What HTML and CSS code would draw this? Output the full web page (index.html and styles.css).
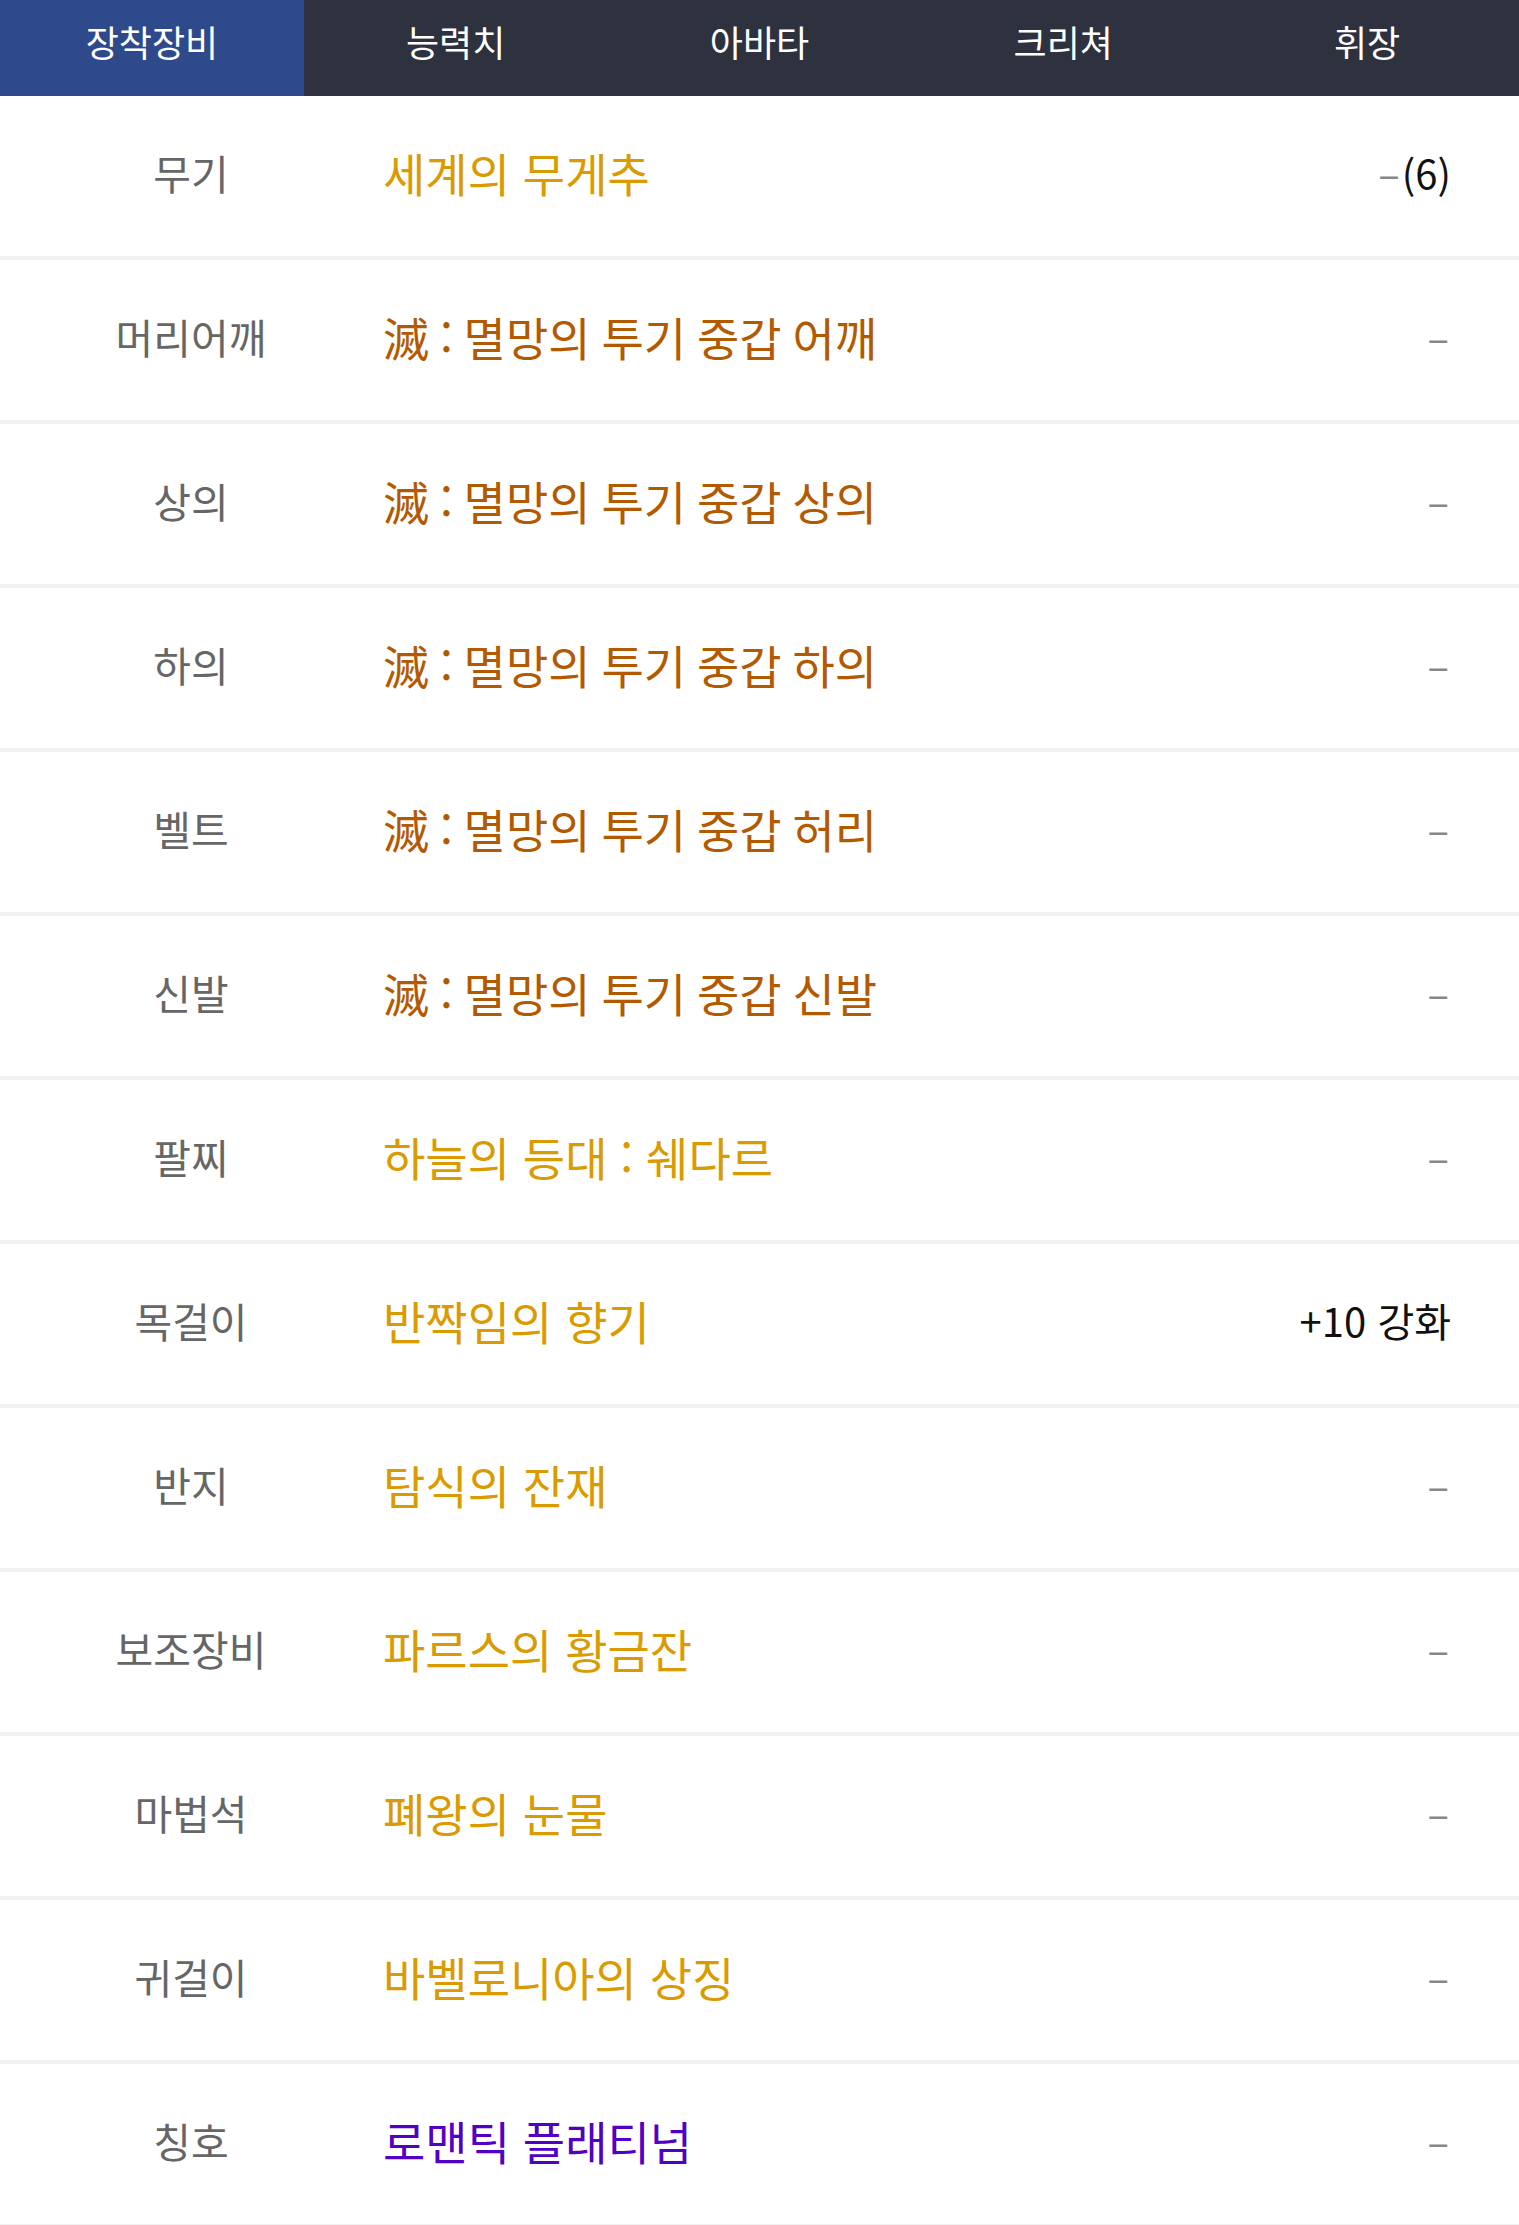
FILE: index.html
```html
<!DOCTYPE html>
<html lang="ko">
<head>
  <meta charset="UTF-8" />
  <title>장착장비</title>
  <link rel="stylesheet" href="styles.css">
</head>
<body>
  <nav class="tabs">
    <a class="tab active">장착장비</a>
    <a class="tab">능력치</a>
    <a class="tab">아바타</a>
    <a class="tab">크리쳐</a>
    <a class="tab">휘장</a>
  </nav>

  <div class="equip-list">
    <div class="row">
      <div class="slot">무기</div>
      <div class="name epic">세계의 무게추</div>
      <div class="value"><span class="dash">–</span>(6)</div>
    </div>
    <div class="row">
      <div class="slot">머리어깨</div>
      <div class="name legend">滅 : 멸망의 투기 중갑 어깨</div>
      <div class="value"><span class="dash">–</span></div>
    </div>
    <div class="row">
      <div class="slot">상의</div>
      <div class="name legend">滅 : 멸망의 투기 중갑 상의</div>
      <div class="value"><span class="dash">–</span></div>
    </div>
    <div class="row">
      <div class="slot">하의</div>
      <div class="name legend">滅 : 멸망의 투기 중갑 하의</div>
      <div class="value"><span class="dash">–</span></div>
    </div>
    <div class="row">
      <div class="slot">벨트</div>
      <div class="name legend">滅 : 멸망의 투기 중갑 허리</div>
      <div class="value"><span class="dash">–</span></div>
    </div>
    <div class="row">
      <div class="slot">신발</div>
      <div class="name legend">滅 : 멸망의 투기 중갑 신발</div>
      <div class="value"><span class="dash">–</span></div>
    </div>
    <div class="row">
      <div class="slot">팔찌</div>
      <div class="name epic">하늘의 등대 : 쉐다르</div>
      <div class="value"><span class="dash">–</span></div>
    </div>
    <div class="row">
      <div class="slot">목걸이</div>
      <div class="name epic">반짝임의 향기</div>
      <div class="value">+10 강화</div>
    </div>
    <div class="row">
      <div class="slot">반지</div>
      <div class="name epic">탐식의 잔재</div>
      <div class="value"><span class="dash">–</span></div>
    </div>
    <div class="row">
      <div class="slot">보조장비</div>
      <div class="name epic">파르스의 황금잔</div>
      <div class="value"><span class="dash">–</span></div>
    </div>
    <div class="row">
      <div class="slot">마법석</div>
      <div class="name epic">폐왕의 눈물</div>
      <div class="value"><span class="dash">–</span></div>
    </div>
    <div class="row">
      <div class="slot">귀걸이</div>
      <div class="name epic">바벨로니아의 상징</div>
      <div class="value"><span class="dash">–</span></div>
    </div>
    <div class="row">
      <div class="slot">칭호</div>
      <div class="name rare">로맨틱 플래티넘</div>
      <div class="value"><span class="dash">–</span></div>
    </div>
  </div>
</body>
</html>
```

FILE: styles.css
```css
body {
  margin: 0;
  font-family: "Noto Sans CJK KR", "Noto Sans", sans-serif;
  background: #fff;
}
.tabs {
  display: grid;
  grid-template-columns: repeat(5, 1fr);
  height: 96px;
  background: #2d323e;
}
.tab {
  display: flex;
  align-items: center;
  justify-content: center;
  color: #fff;
  font-size: 36px;
  padding-bottom: 14px;
}
.tab.active {
  background: #2e4a8b;
}
.row {
  display: grid;
  grid-template-columns: 382px 1fr auto;
  align-items: center;
  height: 164px;
  box-sizing: border-box;
  padding: 0 68px 8px 0;
  border-bottom: 4px solid #f1f1f1;
}
.row:last-child {
  height: 161px;
  border-bottom-width: 1px;
}
.slot {
  text-align: center;
  color: #666;
  font-size: 41px;
}
.name {
  font-size: 46px;
  padding-left: 1px;
}
.epic {
  color: #da9b00;
}
.legend {
  color: #b35900;
  word-spacing: -2px;
}
.rare {
  color: #5100c4;
}
.value {
  font-size: 40px;
  color: #111;
}
.dash {
  color: #888;
  margin-right: 2px;
}
```
